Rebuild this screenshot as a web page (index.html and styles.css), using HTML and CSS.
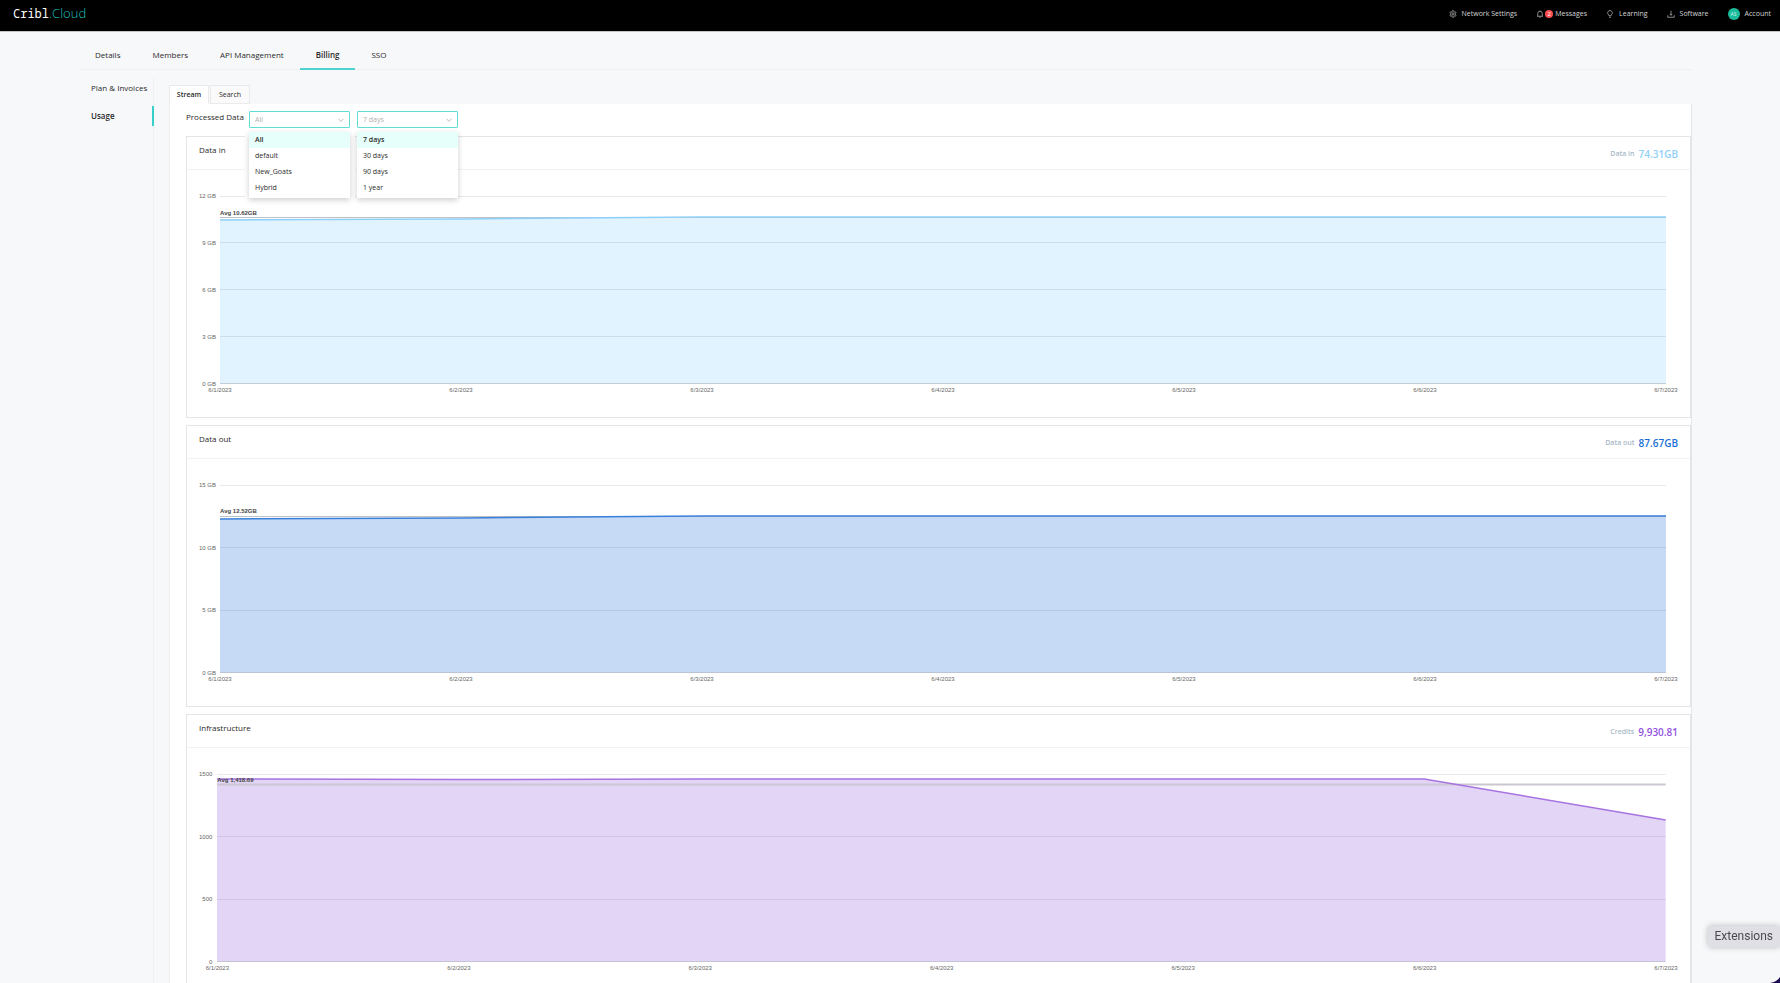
FILE: index.html
```html
<!DOCTYPE html>
<html lang="en">
<head>
  <meta charset="UTF-8" />
  <meta name="viewport" content="width=device-width, initial-scale=1.0"/>
  <title>Cribl.Cloud - Billing</title>
  <link rel="stylesheet" href="styles.css">
</head>
<body>
  <header class="topbar">
    <a href="#" class="logo">Cribl<span>.Cloud</span></a>
    <nav class="topnav">
      <a href="#">
        <svg class="icon" viewBox="0 0 16 16"><path d="M6.7 1.5h2.6l.5 1.9 1.2.7 1.9-.6 1.3 2.3-1.4 1.4v1.6l1.4 1.4-1.3 2.3-1.9-.6-1.2.7-.5 1.9H6.700l-.5-1.900-1.200-.7-1.900.6-1.300-2.300 1.400-1.400V7.200L1.800 5.800l1.300-2.300 1.900.6 1.200-.7z"/><circle cx="8" cy="8" r="2.300"/></svg>
        Network Settings
      </a>
      <a href="#" class="messages">
        <svg class="icon" viewBox="0 0 16 16"><path d="M2 12.500h12M3.500 12.500V7a4.500 4.500 0 0 1 9 0v5.500M8 1v1.500M6.500 14.500h3"/></svg>
        <span class="count">2</span>
        Messages
      </a>
      <a href="#">
        <svg class="icon" viewBox="0 0 16 16"><path d="M6 11.500V10a4.700 4.700 0 1 1 4 0v1.500zM6 14.500h4"/></svg>
        Learning
      </a>
      <a href="#">
        <svg class="icon" viewBox="0 0 16 16"><path d="M1.500 10.500v4h13v-4M8 1.500v9M5.500 8 8 10.500 10.500 8"/></svg>
        Software
      </a>
      <a href="#" class="account"><span class="avatar">AS</span>Account</a>
    </nav>
  </header>

  <div class="page">
    <nav class="tabs">
      <a href="#">Details</a>
      <a href="#">Members</a>
      <a href="#">API Management</a>
      <a href="#" class="active">Billing</a>
      <a href="#">SSO</a>
    </nav>

    <div class="content">
      <nav class="side-menu">
        <a href="#">Plan &amp; Invoices</a>
        <a href="#" class="active">Usage</a>
      </nav>

      <main class="usage">
        <div class="card-tabs">
          <button class="active">Stream</button>
          <button>Search</button>
        </div>

        <div class="panel">
          <div class="filters">
            <label for="group">Processed Data</label>
            <div class="picker group-picker">
              <select id="group">
                <option>All</option>
                <option>default</option>
                <option>New_Goats</option>
                <option>Hybrid</option>
              </select>
              <svg class="chevron" viewBox="0 0 10 10"><path d="M1 3l4 4.500L9 3"/></svg>
              <div class="menu-wrap">
                <div class="menu">
                  <button class="selected">All</button>
                  <button>default</button>
                  <button>New_Goats</button>
                  <button>Hybrid</button>
                </div>
              </div>
            </div>
            <div class="picker">
              <select id="range" aria-label="Time range">
                <option>7 days</option>
                <option>30 days</option>
                <option>90 days</option>
                <option>1 year</option>
              </select>
              <svg class="chevron" viewBox="0 0 10 10"><path d="M1 3l4 4.500L9 3"/></svg>
              <div class="menu-wrap">
                <div class="menu">
                  <button class="selected">7 days</button>
                  <button>30 days</button>
                  <button>90 days</button>
                  <button>1 year</button>
                </div>
              </div>
            </div>
          </div>

          <section class="card data-in">
            <div class="card-head">
              <h2>Data in</h2>
              <p>Data in <strong>74.31GB</strong></p>
            </div>
            <div class="chart">
              <div class="y-axis"><span>12 GB</span><span>9 GB</span><span>6 GB</span><span>3 GB</span><span>0 GB</span></div>
              <div class="plot">
                <svg viewBox="0 0 600 188" preserveAspectRatio="none">
                  <path class="area" d="M0 24L100 23L200 21H600V187.500H0z"/>
                  <path class="grid" d="M0 .5H600M0 46.500H600M0 93.500H600M0 140.500H600"/>
                  <path class="base" d="M0 187.500H600"/>
                  <path class="avg" d="M0 21.500H600"/>
                  <path class="line" d="M0 24L100 23L200 21H600"/>
                </svg>
                <span class="avg-label" style="top: 13px">Avg 10.62GB</span>
                <div class="x-axis"><span>6/1/2023</span><span>6/2/2023</span><span>6/3/2023</span><span>6/4/2023</span><span>6/5/2023</span><span>6/6/2023</span><span>6/7/2023</span></div>
              </div>
            </div>
          </section>

          <section class="card data-out">
            <div class="card-head">
              <h2>Data out</h2>
              <p>Data out <strong>87.67GB</strong></p>
            </div>
            <div class="chart">
              <div class="y-axis"><span>15 GB</span><span>10 GB</span><span>5 GB</span><span>0 GB</span></div>
              <div class="plot">
                <svg viewBox="0 0 600 188" preserveAspectRatio="none">
                  <path class="area" d="M0 34L100 33L200 31H600V187.500H0z"/>
                  <path class="grid" d="M0 .5H600M0 62.500H600M0 125.500H600"/>
                  <path class="base" d="M0 187.500H600"/>
                  <path class="avg" d="M0 31.500H600"/>
                  <path class="line" d="M0 34L100 33L200 31H600"/>
                </svg>
                <span class="avg-label" style="top: 22px">Avg 12.52GB</span>
                <div class="x-axis"><span>6/1/2023</span><span>6/2/2023</span><span>6/3/2023</span><span>6/4/2023</span><span>6/5/2023</span><span>6/6/2023</span><span>6/7/2023</span></div>
              </div>
            </div>
          </section>

          <section class="card infra">
            <div class="card-head">
              <h2>Infrastructure</h2>
              <p>Credits <strong>9,930.81</strong></p>
            </div>
            <div class="chart">
              <div class="y-axis"><span>1500</span><span>1000</span><span>500</span><span>0</span></div>
              <div class="plot">
                <svg viewBox="0 0 600 188" preserveAspectRatio="none">
                  <path class="area" d="M0 5L100 5.500L200 5H500L600 46V187.500H0z"/>
                  <path class="grid" d="M0 .5H600M0 62.500H600M0 125.500H600"/>
                  <path class="base" d="M0 187.500H600"/>
                  <path class="avg" d="M0 10.500H600"/>
                  <path class="line" d="M0 5L100 5.500L200 5H500L600 46"/>
                </svg>
                <span class="avg-label" style="top: 2px">Avg 1,418.69</span>
                <div class="x-axis"><span>6/1/2023</span><span>6/2/2023</span><span>6/3/2023</span><span>6/4/2023</span><span>6/5/2023</span><span>6/6/2023</span><span>6/7/2023</span></div>
              </div>
            </div>
          </section>
        </div>
      </main>
    </div>
  </div>

  <div class="tooltip">Extensions</div>
  <svg class="corner" viewBox="0 0 10 6"><path d="M0 6Q7 5 10 0V6z"/></svg>
</body>
</html>
```
FILE: styles.css
```css
* {
  box-sizing: border-box;
}
body {
  font-family: "Open Sans", "Noto Sans", sans-serif;
  font-size: 8px;
  line-height: 12px;
  color: #2a2a2a;
  background: #f7f8fa;
  margin: 0;
  height: 100vh;
  overflow: hidden;
}
a {
  color: inherit;
  text-decoration: none;
}
button, select {
  font: inherit;
  color: inherit;
  margin: 0;
}

/* top bar */
.topbar {
  display: flex;
  justify-content: space-between;
  align-items: center;
  height: 32px;
  padding: 0 9px 4px 13px;
  background: #000;
  border-bottom: 1px solid #c4c4c4;
}
.logo {
  font-family: "Noto Sans Mono", "DejaVu Sans Mono", "Noto Sans", monospace;
  font-size: 12px;
  line-height: 16px;
  color: #fff;
}
.logo span {
  font-family: "Open Sans", sans-serif;
  font-weight: 300;
  font-size: 13px;
  color: #1fc0bb;
}
.topnav {
  display: flex;
  gap: 19px;
  font-size: 7px;
  color: #d4d4d4;
}
.topnav a {
  display: flex;
  align-items: center;
  gap: 5px;
}
.topnav .messages {
  gap: 1px;
}
.icon {
  width: 8px;
  height: 8px;
  fill: none;
  stroke: #b4b4b4;
  stroke-width: 1.500;
}
.count {
  width: 8px;
  height: 8px;
  margin-right: 1px;
  border-radius: 4px;
  background: #ff4d4f;
  color: #fff;
  font-size: 6px;
  line-height: 8px;
  text-align: center;
}
.avatar {
  width: 12px;
  height: 12px;
  border-radius: 6px;
  background: #1abc9c;
  color: #d5f5ee;
  font-size: 5px;
  text-align: center;
}

/* main tabs */
.page {
  margin: 0 88px 0 79px;
}
.tabs {
  display: flex;
  height: 38px;
  border-bottom: 1px solid #eef0f2;
}
.tabs a {
  height: 38px;
  padding: 17px 16px 0;
}
.tabs .active {
  border-bottom: 2px solid #4fd1d0;
}
.active {
  font-weight: 600;
}
.content {
  display: flex;
  gap: 15px;
}
.side-menu {
  display: flex;
  flex-direction: column;
  gap: 8px;
  width: 75px;
  margin-top: 8px;
  border-right: 1px solid #eef0f2;
}
.side-menu a {
  height: 20px;
  padding: 4px 0 4px 12px;
  margin-right: -1px;
  white-space: nowrap;
}
.side-menu .active {
  border-right: 2px solid #36cfc9;
}

/* usage panel */
.usage {
  flex: 1;
  min-width: 0;
  padding-top: 15px;
}
.card-tabs {
  display: flex;
  gap: 1px;
}
.card-tabs button {
  height: 19px;
  width: 40px;
  padding: 0;
  font-size: 7px;
  background: #fafafa;
  border: 1px solid #eaeaea;
}
.card-tabs .active {
  background: #fff;
  border-bottom-color: #fff;
}
.panel {
  padding: 7px 0 0 16px;
  background: #fff;
  border-left: 1px solid #eee;
  border-right: 1px solid #e4e5e7;
}
.filters {
  display: flex;
  height: 25px;
}
.filters label {
  width: 63px;
  white-space: nowrap;
}
.picker {
  position: relative;
  width: 101px;
  margin-right: 7px;
  font-size: 7px;
}
.picker select {
  appearance: none;
  display: block;
  width: 100%;
  height: 17px;
  padding: 0 5px;
  color: #b0b0b0;
  background: #fff;
  border: 1px solid #5fdcd5;
  border-radius: 1px;
  outline: none;
}
.chevron {
  position: absolute;
  right: 6px;
  top: 6px;
  width: 6px;
  height: 6px;
  fill: none;
  stroke: #b8b8b8;
  stroke-width: 1.500;
  pointer-events: none;
}
.menu-wrap {
  position: absolute;
  z-index: 2;
  top: 21px;
  left: 0;
  right: 0;
}
.group-picker .menu-wrap {
  left: -4px;
  right: -5px;
  padding: 0 5px 12px 4px;
  background: #fff;
}
.menu {
  padding-bottom: 2px;
  background: #fff;
  box-shadow: 0 2px 6px rgba(0, 0, 0, 0.2);
}
.menu button {
  display: block;
  width: 100%;
  height: 16px;
  padding: 0 6px;
  text-align: left;
  background: none;
  border: 0;
}
.menu .selected {
  font-weight: 600;
  background: #e6fffb;
}

/* cards */
.card {
  height: 282px;
  margin-bottom: 7px;
  border: 1px solid #e4e5e7;
}
.card-head {
  display: flex;
  justify-content: space-between;
  height: 33px;
  padding: 7px 12px 0;
  border-bottom: 1px solid #f2f2f2;
}
.card-head h2 {
  margin: 0;
  font-size: 8px;
  font-weight: 400;
}
.card-head p {
  display: flex;
  align-items: center;
  gap: 4px;
  height: 19px;
  margin: 0;
  font-size: 7px;
  font-weight: 600;
  color: #a9b8c6;
}
.card-head strong {
  font-size: 10px;
  font-weight: 600;
}
.chart {
  display: flex;
  gap: 4px;
  padding: 26px 24px 0 12px;
  font-family: "Liberation Sans", Arial, sans-serif;
  font-size: 6px;
  line-height: 8px;
  color: #666;
}
.infra .chart {
  gap: 5px;
}
.y-axis {
  display: flex;
  flex-direction: column;
  justify-content: space-between;
  height: 196px;
  margin-top: -4px;
  text-align: right;
}
.plot {
  position: relative;
  flex: 1;
}
.plot svg {
  display: block;
  width: 100%;
  height: 188px;
  overflow: visible;
}
.plot path {
  fill: none;
  vector-effect: non-scaling-stroke;
}
.plot .grid {
  stroke: rgba(60, 70, 90, 0.12);
}
.plot .base {
  stroke: rgba(60, 70, 90, 0.24);
}
.plot .avg {
  stroke: #bfc2c6;
}
.plot .line {
  stroke-width: 1.500;
}
.infra .avg {
  stroke-width: 2;
  stroke: #cbc6d2;
}
.avg-label {
  position: absolute;
  left: 0;
  font-weight: 700;
  color: #444;
}
.x-axis {
  display: flex;
  justify-content: space-between;
  margin-top: 2px;
}
.x-axis span {
  display: flex;
  justify-content: center;
  width: 0;
}
.data-in .area {
  fill: #e1f3fe;
}
.data-in .line {
  stroke: #8fd0f8;
}
.data-in strong {
  color: #8fd0f8;
}
.data-out .area {
  fill: #c6daf6;
}
.data-out .line {
  stroke: #3a80da;
}
.data-out strong {
  color: #1a6fd6;
}
.infra .area {
  fill: #e3d5f6;
}
.infra .line {
  stroke: #a673e0;
}
.infra strong {
  color: #9254de;
}

.tooltip {
  position: fixed;
  right: 0;
  bottom: 36px;
  padding: 3px 7px;
  font-family: Roboto, sans-serif;
  font-size: 12px;
  line-height: 15px;
  color: #4a4a4e;
  background: #e0dfe6;
  border-radius: 2px 0 0 2px;
  box-shadow: 0 0 6px rgba(0, 0, 0, 0.25);
}
.corner {
  position: fixed;
  right: 0;
  bottom: 0;
  width: 10px;
  height: 6px;
  fill: #1c0a55;
}
```
